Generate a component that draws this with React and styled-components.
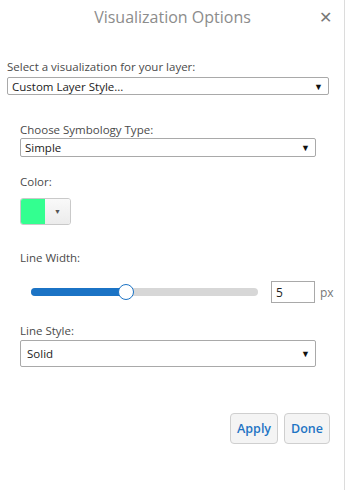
import React from 'react';
import styled, { createGlobalStyle } from 'styled-components';

const GlobalStyle = createGlobalStyle`
  html, body { margin: 0; padding: 0; background: #fff; }
  body { font-family: "Open Sans", "Noto Sans", sans-serif; }
`;

const Dialog = styled.div`
  width: 345px;
  height: 490px;
  box-sizing: border-box;
  border-right: 1px solid #dcdcdc;
  background: #fff;
  display: flex;
  flex-direction: column;
`;

const Header = styled.div`
  display: flex;
  align-items: center;
  height: 34px;
  padding: 0 11px 0 0;
`;

const Title = styled.div`
  flex: 1;
  text-align: center;
  font-size: 16px;
  color: #8c8c8c;
  padding-left: 28px;
`;

const Close = styled.div`
  width: 16px;
  font-size: 16px;
  line-height: 16px;
  color: #777;
  text-align: center;
`;

const Body = styled.div`
  padding: 25px 15px 0 7px;
  display: flex;
  flex-direction: column;
`;

const Label = styled.div`
  font-size: 11.5px;
  color: #4a4a4a;
  line-height: 15px;
`;

const Select = styled.div`
  display: flex;
  align-items: center;
  justify-content: space-between;
  box-sizing: border-box;
  height: ${p => p.$h}px;
  margin-top: ${p => p.$mt}px;
  border: 1px solid #a9a9a9;
  border-radius: 2px;
  padding: 0 5px 0 ${p => p.$h > 20 ? 6 : 4}px;
  font-size: 11.5px;
  color: #222;
`;

const Caret = styled.span`
  font-size: 9px;
  color: #111;
`;

const Section = styled.div`
  padding: 27px 13px 0 13px;
  display: flex;
  flex-direction: column;
`;

const Field = styled.div`
  display: flex;
  flex-direction: column;
  margin-bottom: ${p => p.$gap}px;
`;

const ColorButton = styled.div`
  display: flex;
  margin-top: 9px;
  width: 51px;
  height: 27px;
  box-sizing: border-box;
  border: 1px solid #c9c9c9;
  border-radius: 3px;
  overflow: hidden;
`;

const Swatch = styled.div`
  width: 24px;
  background: ${p => p.$color};
`;

const SwatchArrow = styled.div`
  flex: 1;
  display: flex;
  align-items: center;
  justify-content: center;
  background: linear-gradient(#f9f9f9, #ececec);
  font-size: 7px;
  color: #555;
`;

const SliderRow = styled.div`
  display: flex;
  align-items: center;
  margin-top: 16px;
  padding-left: 11px;
  & > * { flex-shrink: 0; }
`;

const Track = styled.div`
  position: relative;
  width: 227px;
  height: 8px;
  border-radius: 4px;
  background: #d7d7d7;
`;

const Fill = styled.div`
  height: 100%;
  border-radius: 4px;
  background: #1b73c5;
`;

const Thumb = styled.div`
  position: absolute;
  top: 50%;
  width: 14px;
  height: 14px;
  margin: -8px 0 0 -8px;
  border-radius: 50%;
  background: #fff;
  border: 1px solid #1b73c5;
`;

const NumberBox = styled.div`
  margin-left: 13px;
  width: 44px;
  height: 22px;
  box-sizing: border-box;
  border: 1px solid #a9a9a9;
  font-size: 12px;
  color: #222;
  padding: 2px 0 0 4px;
`;

const Unit = styled.span`
  margin-left: 5px;
  font-size: 12px;
  color: #777;
`;

const Footer = styled.div`
  display: flex;
  justify-content: flex-end;
  gap: 6px;
  margin: 46px -1px 0 0;
`;

const Button = styled.button`
  height: 31px;
  padding: 0 6px;
  border: 1px solid #cfcfcf;
  border-radius: 4px;
  background: #f4f4f4;
  color: #1f74c4;
  font-family: inherit;
  font-size: 12.5px;
  font-weight: 600;
`;

export default function App() {
  const value = 5;
  const pct = 42;
  return (
    <>
      <GlobalStyle />
      <Dialog>
        <Header>
          <Title>Visualization Options</Title>
          <Close>✕</Close>
        </Header>
        <Body>
          <Label>Select a visualization for your layer:</Label>
          <Select $h={18} $mt={3}>Custom Layer Style...<Caret>▼</Caret></Select>
          <Section>
            <Field $gap={17}>
              <Label>Choose Symbology Type:</Label>
              <Select $h={19} $mt={1}>Simple<Caret>▼</Caret></Select>
            </Field>
            <Field $gap={25}>
              <Label>Color:</Label>
              <ColorButton>
                <Swatch $color="#33ff90" />
                <SwatchArrow>▼</SwatchArrow>
              </ColorButton>
            </Field>
            <Field $gap={20}>
              <Label>Line Width:</Label>
              <SliderRow>
                <Track>
                  <Fill style={{ width: `${pct}%` }} />
                  <Thumb style={{ left: `${pct}%` }} />
                </Track>
                <NumberBox>{value}</NumberBox>
                <Unit>px</Unit>
              </SliderRow>
            </Field>
            <Field $gap={0}>
              <Label>Line Style:</Label>
              <Select $h={27} $mt={2}>Solid<Caret>▼</Caret></Select>
            </Field>
          </Section>
          <Footer>
            <Button>Apply</Button>
            <Button>Done</Button>
          </Footer>
        </Body>
      </Dialog>
    </>
  );
}
